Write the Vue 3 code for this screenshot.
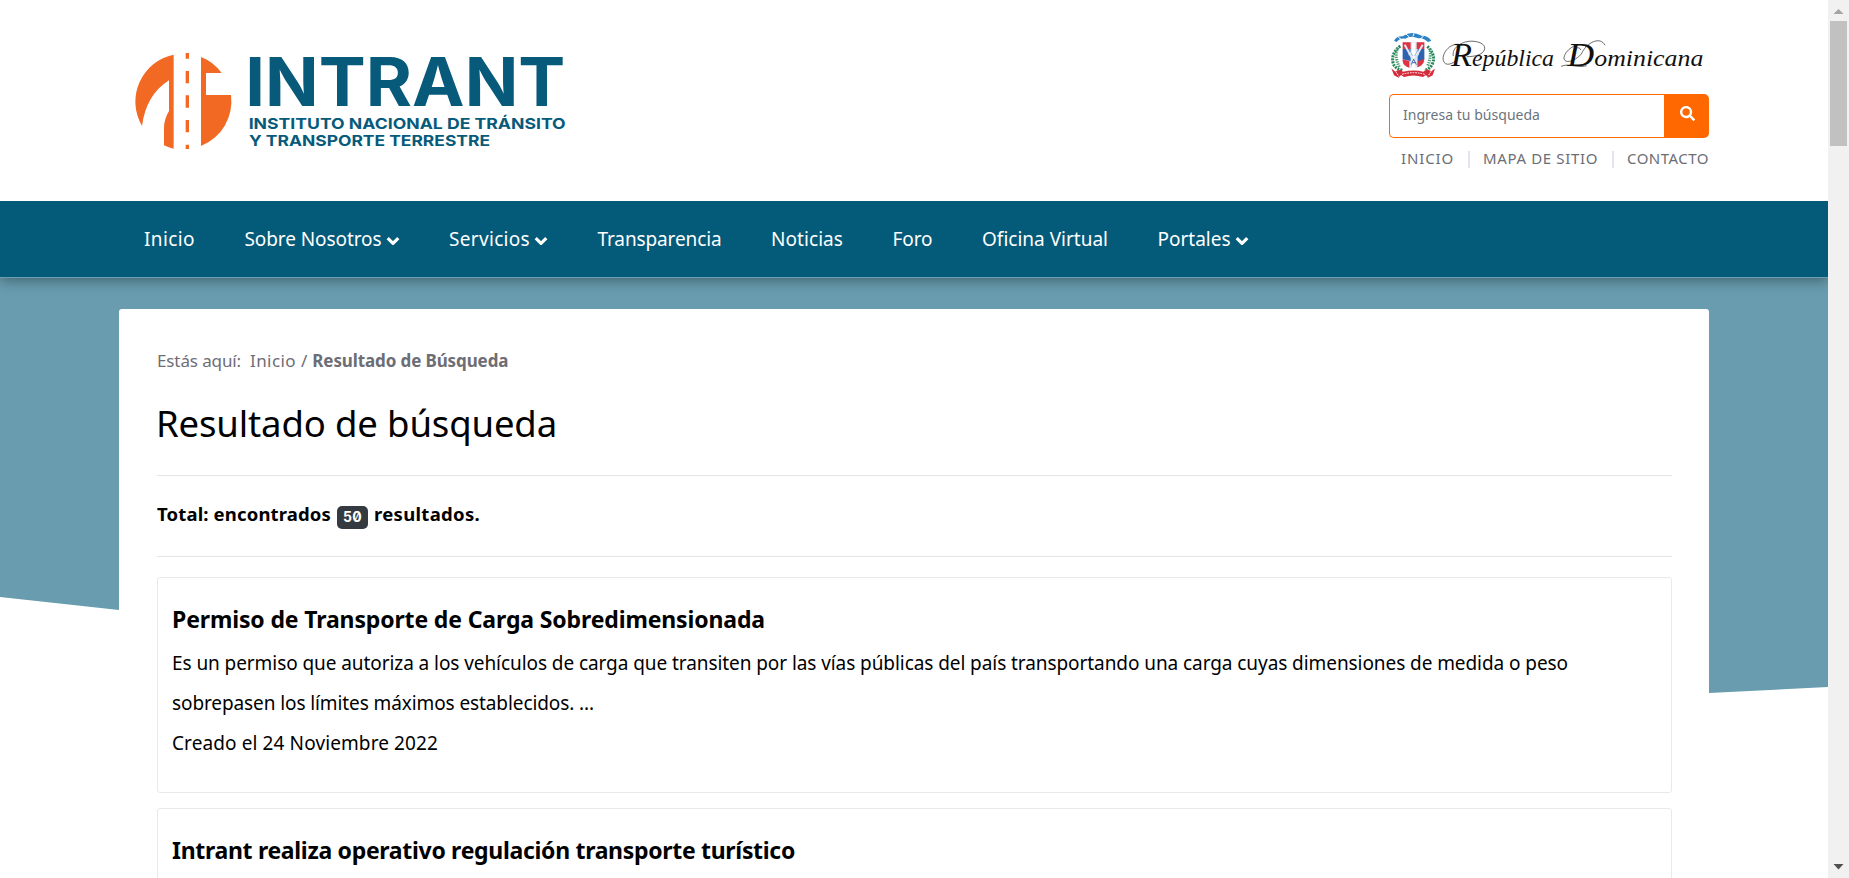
<script setup>
import { onMounted } from 'vue'

// Adjusts tracking so a label occupies the given advance width.
const fitText = (el, { value }) => {
  el.style.letterSpacing = '0px'
  const natural = el.getBoundingClientRect().width
  el.style.letterSpacing = `${(value - natural) / el.textContent.length}px`
}
const vFit = { mounted: fitText }

onMounted(() => {
  document.title = 'Resultado de Búsqueda'
})

const navItems = [
  { label: 'Inicio', width: 51 },
  { label: 'Sobre Nosotros', width: 137, menu: true },
  { label: 'Servicios', width: 81, menu: true },
  { label: 'Transparencia', width: 124 },
  { label: 'Noticias', width: 72 },
  { label: 'Foro', width: 40 },
  { label: 'Oficina Virtual', width: 126 },
  { label: 'Portales', width: 73, menu: true },
]
const links = [
  { label: 'INICIO', width: 53 },
  { label: 'MAPA DE SITIO', width: 115 },
  { label: 'CONTACTO', width: 82 },
]
const results = [
  {
    title: 'Permiso de Transporte de Carga Sobredimensionada',
    width: 593,
    lines: [
      { text: 'Es un permiso que autoriza a los vehículos de carga que transiten por las vías públicas del país transportando una carga cuyas dimensiones de medida o peso', width: 1396 },
      { text: 'sobrepasen los límites máximos establecidos. ...', width: 422 },
      { text: 'Creado el 24 Noviembre 2022', width: 266 },
    ],
  },
  {
    title: 'Intrant realiza operativo regulación transporte turístico',
    width: 623,
    lines: [],
  },
]
</script>

<template>
  <div class="window">
    <div class="page">
      <header class="top">
        <svg class="logo" viewBox="0 0 1380 360" role="img" aria-label="INTRANT">
          <g fill="#f26924">
            <path d="M161 44A144 144 0 0 0 66 258Q78 165 147 121V213Q132 238 132 264V316Q146 323 161 326Z" />
            <path d="M243 51Q280 65 305 99H258V165H333A144 144 0 0 1 243 318Z" />
            <path d="M197 39h10v17h-10zM197 93h10v37h-10zM197 166h10v37h-10zM197 240h10v37h-10zM197 314h10v13h-10z" />
          </g>
          <g class="logo-text">
            <text class="logo-name" x="376" y="197" textLength="960" lengthAdjust="spacingAndGlyphs">INTRANT</text>
            <text class="logo-sub" x="386" y="268" textLength="951" lengthAdjust="spacingAndGlyphs">INSTITUTO NACIONAL DE TRÁNSITO</text>
            <text class="logo-sub" x="387" y="318" textLength="723" lengthAdjust="spacingAndGlyphs">Y TRANSPORTE TERRESTRE</text>
          </g>
        </svg>

        <div class="tools">
          <svg class="republic" viewBox="57 24 960 198" role="img" aria-label="República Dominicana">
            <path d="M72 62Q80 48 98 49Q124 30 155 47Q173 46 184 62L174 66Q160 52 145 55Q122 45 106 56Q90 54 80 66Z" fill="#2e82c6" />
            <path d="M85 52l12 8M108 42l10 9M132 40l-3 9M160 48l-8 9" stroke="#fff" stroke-width="3" />
            <path d="M98 67H163V124Q160 142 131 145Q102 142 98 124Z" fill="#dfe6ef" />
            <path d="M98 87h24v36L98 118zM143 87h20v31l-20 24z" fill="#2d62b0" />
            <path d="M98 67h24v20H98zM140 67h23v20h-23zM98 118l20 5v20q-18-4-20-19zM143 124l20-8q-1 20-20 25z" fill="#dd3342" />
            <path d="M126 68h10v28h10v10h-10v38h-10v-38h-10V96h10z" fill="#fff" />
            <path d="M104 74l24 44M158 74l-24 44" stroke="#dbe5f3" stroke-width="6" />
            <path d="M118 88l10 20M144 88l-10 20" stroke="#9db7dc" stroke-width="3" />
            <path d="M124 134l7-17 8 17M127 128h9" fill="none" stroke="#3c68ad" stroke-width="3" />
            <path d="M91 78Q61 100 70 132Q77 147 97 151M172 79Q199 105 187 132Q179 148 163 151" fill="none" stroke="#27865a" stroke-width="9" stroke-dasharray="6 3" />
            <path d="M84 83Q72 109 88 141M179 85Q185 111 172 140" fill="none" stroke="#4b9e76" stroke-width="9" stroke-dasharray="4 3" />
            <path d="M64 145l10 9 17-5 8 6q33-7 61 0l11-7 13 6 11-8-7 20-14 7-6-8-9 6q-29-9-57 0l-9-6-7 8-14-7z" fill="#d52b3b" />
            <path d="M96 163q35-10 68 0M77 154l10 16M183 154l-9 15" fill="none" stroke="#fff" stroke-width="3" stroke-dasharray="5 3" />
            <g fill="none" stroke="#222" stroke-width="2">
              <path d="M277 76C245 62 214 98 220 122C225 140 248 133 262 118M250 108C244 82 280 60 312 64C334 66 348 76 343 90C338 104 315 110 290 110" />
              <path d="M618 90C616 80 632 82 632 90M648 80C628 62 588 86 582 112C580 134 616 124 634 102C650 66 692 48 705 76M573 139C600 128 620 146 650 137" />
            </g>
            <text class="script" x="243" y="137" textLength="309" lengthAdjust="spacingAndGlyphs"><tspan class="initial">R</tspan>epública</text>
            <text class="script" x="592" y="137" textLength="408" lengthAdjust="spacingAndGlyphs"><tspan class="initial">D</tspan>ominicana</text>
          </svg>
          <form class="search" @submit.prevent>
            <div class="field"><span v-fit="137">Ingresa tu búsqueda</span></div>
            <button class="submit" aria-label="Buscar">
              <svg viewBox="0 0 512 512" width="15" height="15"><path fill="#fff" d="M505 442.700L405.300 343c-4.500-4.500-10.600-7-17-7H372c27.600-35.300 44-79.700 44-128C416 93.100 322.900 0 208 0S0 93.100 0 208s93.100 208 208 208c48.300 0 92.700-16.400 128-44v16.300c0 6.400 2.500 12.500 7 17l99.700 99.700c9.400 9.400 24.600 9.400 33.900 0l28.300-28.300c9.400-9.400 9.400-24.600.1-34zM208 336c-70.700 0-128-57.200-128-128 0-70.700 57.200-128 128-128 70.700 0 128 57.200 128 128 0 70.700-57.200 128-128 128z" /></svg>
            </button>
          </form>
          <div class="links">
            <a v-for="l in links" :key="l.label"><span v-fit="l.width">{{ l.label }}</span></a>
          </div>
        </div>
      </header>

      <nav class="nav">
        <a v-for="n in navItems" :key="n.label" class="nav-item">
          <span v-fit="n.width">{{ n.label }}</span>
          <svg v-if="n.menu" viewBox="0 0 14 10" width="14" height="10"><path d="M1.700 2.200L7 7.300L12.300 2.200" fill="none" stroke="#fff" stroke-width="3.200" stroke-linejoin="round" /></svg>
        </a>
      </nav>

      <main class="stage">
        <svg class="backdrop" viewBox="0 0 1828 600" preserveAspectRatio="none" aria-hidden="true">
          <path d="M0 0H1828V410L1709 416Q900 430 119 333L0 320Z" fill="#689cae" />
        </svg>
        <section class="card">
          <div class="crumbs">
            <span v-fit="84">Estás aquí:</span>
            <span v-fit="46" class="crumb-home">Inicio</span>
            <span class="slash">/</span>
            <strong v-fit="196">Resultado de Búsqueda</strong>
          </div>
          <h1><span v-fit="401">Resultado de búsqueda</span></h1>
          <div class="total">
            <span v-fit="174">Total: encontrados</span>
            <span class="badge"><span v-fit="19">50</span></span>
            <span v-fit="106">resultados.</span>
          </div>
          <div class="results">
            <article v-for="r in results" :key="r.title" class="result">
              <h2><span v-fit="r.width">{{ r.title }}</span></h2>
              <p v-for="line in r.lines" :key="line.text"><span v-fit="line.width">{{ line.text }}</span></p>
            </article>
          </div>
        </section>
      </main>
    </div>

    <div class="scrollbar">
      <svg viewBox="0 0 21 21" width="21" height="21"><path d="M5.500 14L10.500 9L15.500 14Z" fill="#a3a3a3" /></svg>
      <div class="thumb"></div>
      <svg viewBox="0 0 21 21" width="21" height="21"><path d="M5.500 7L10.500 12.500L15.500 7Z" fill="#505050" /></svg>
    </div>
  </div>
</template>

<style>
body { margin: 0; overflow: hidden; background: #fff; }
</style>

<style scoped>
* { box-sizing: border-box; }
.window { display: flex; width: 1849px; height: 878px; overflow: hidden; font-family: "Noto Sans", "Open Sans", sans-serif; color: #000; }
.window span, .window strong { white-space: nowrap; }
.page { width: 1828px; height: 878px; overflow: hidden; }
.top { display: flex; justify-content: space-between; height: 201px; padding: 28px 119px 0 120px; }
.logo { width: 460px; height: 120px; margin-top: 12px; }
.logo-text { fill: #075a7a; font-family: Inter, sans-serif; font-weight: 700; }
.logo-name { font-size: 201px; }
.logo-sub { font-size: 45px; }
.tools { width: 320px; }
.republic { display: block; width: 320px; height: 66px; }
.script { font-family: "Liberation Serif", serif; font-style: italic; font-size: 72px; fill: #111; }
.initial { font-size: 104px; }
.search { display: flex; height: 44px; }
.field { flex: 1; border: 1px solid #ff6700; border-right: 0; border-radius: 5px 0 0 5px; padding-left: 13px; font-size: 14px; line-height: 40px; color: #6c757d; }
.submit { display: flex; justify-content: center; width: 45px; padding: 12px 0 0 1px; border: 0; border-radius: 0 5px 5px 0; background: #ff6700; }
.links { display: flex; justify-content: flex-end; margin-top: 8px; font-size: 15px; line-height: 24px; color: #6c6e76; }
.links a + a { display: flex; }
.links a + a::before { content: ""; width: 2px; height: 17px; margin: 5px 13px 0 14px; background: #e4e4ea; }
.nav { position: relative; z-index: 1; display: flex; gap: 49.500px; height: 77px; padding-left: 144px; background: #045a79; border-bottom: 1px solid #6e9fb0; box-shadow: 0 3px 12px rgba(0, 0, 0, .35); clip-path: inset(0 0 -20px 0); font-size: 19px; line-height: 78px; color: #fff; }
.nav-item { display: flex; align-items: center; gap: 4px; }
.nav-item svg { margin-top: 3px; }
.stage { position: relative; padding: 31px 119px 0; }
.backdrop { position: absolute; left: 0; top: -1px; width: 1828px; height: 600px; }
.card { position: relative; width: 1590px; height: 700px; padding: 40px 37px 0 38px; background: #fff; border-radius: 3px 3px 0 0; }
.crumbs { display: flex; height: 24px; font-size: 17px; line-height: 24px; color: #6c6d75; }
.crumb-home { margin-left: 9px; }
.slash { margin: 0 5px; }
h1 { margin: 28px 0 30px -1px; font-size: 36.500px; font-weight: 400; line-height: 44px; }
.total { display: flex; gap: 6px; height: 82px; padding-top: 24px; border-top: 1px solid #e5e5e5; border-bottom: 1px solid #e5e5e5; font-size: 18.500px; font-weight: 700; line-height: 28px; }
.badge { width: 31px; height: 23px; margin-top: 6px; border-radius: 5px; background: #343a40; color: #fff; font-family: Inter, sans-serif; font-feature-settings: "zero"; font-size: 14px; line-height: 21px; text-align: center; }
.results { display: flex; flex-direction: column; gap: 15px; padding-top: 20px; }
.result { height: 216px; flex: none; padding: 25px 14px; border: 1px solid #e9e9e9; border-radius: 3px; }
h2 { margin: 0 0 8px; font-size: 23px; font-weight: 700; line-height: 32px; }
p { margin: 0; font-size: 19px; line-height: 40px; }
.scrollbar { display: flex; flex-direction: column; width: 21px; height: 878px; background: #f1f1f1; }
.scrollbar svg:last-child { margin-top: auto; }
.thumb { width: 17px; height: 125px; margin-left: 2px; background: #c1c1c1; }
</style>
